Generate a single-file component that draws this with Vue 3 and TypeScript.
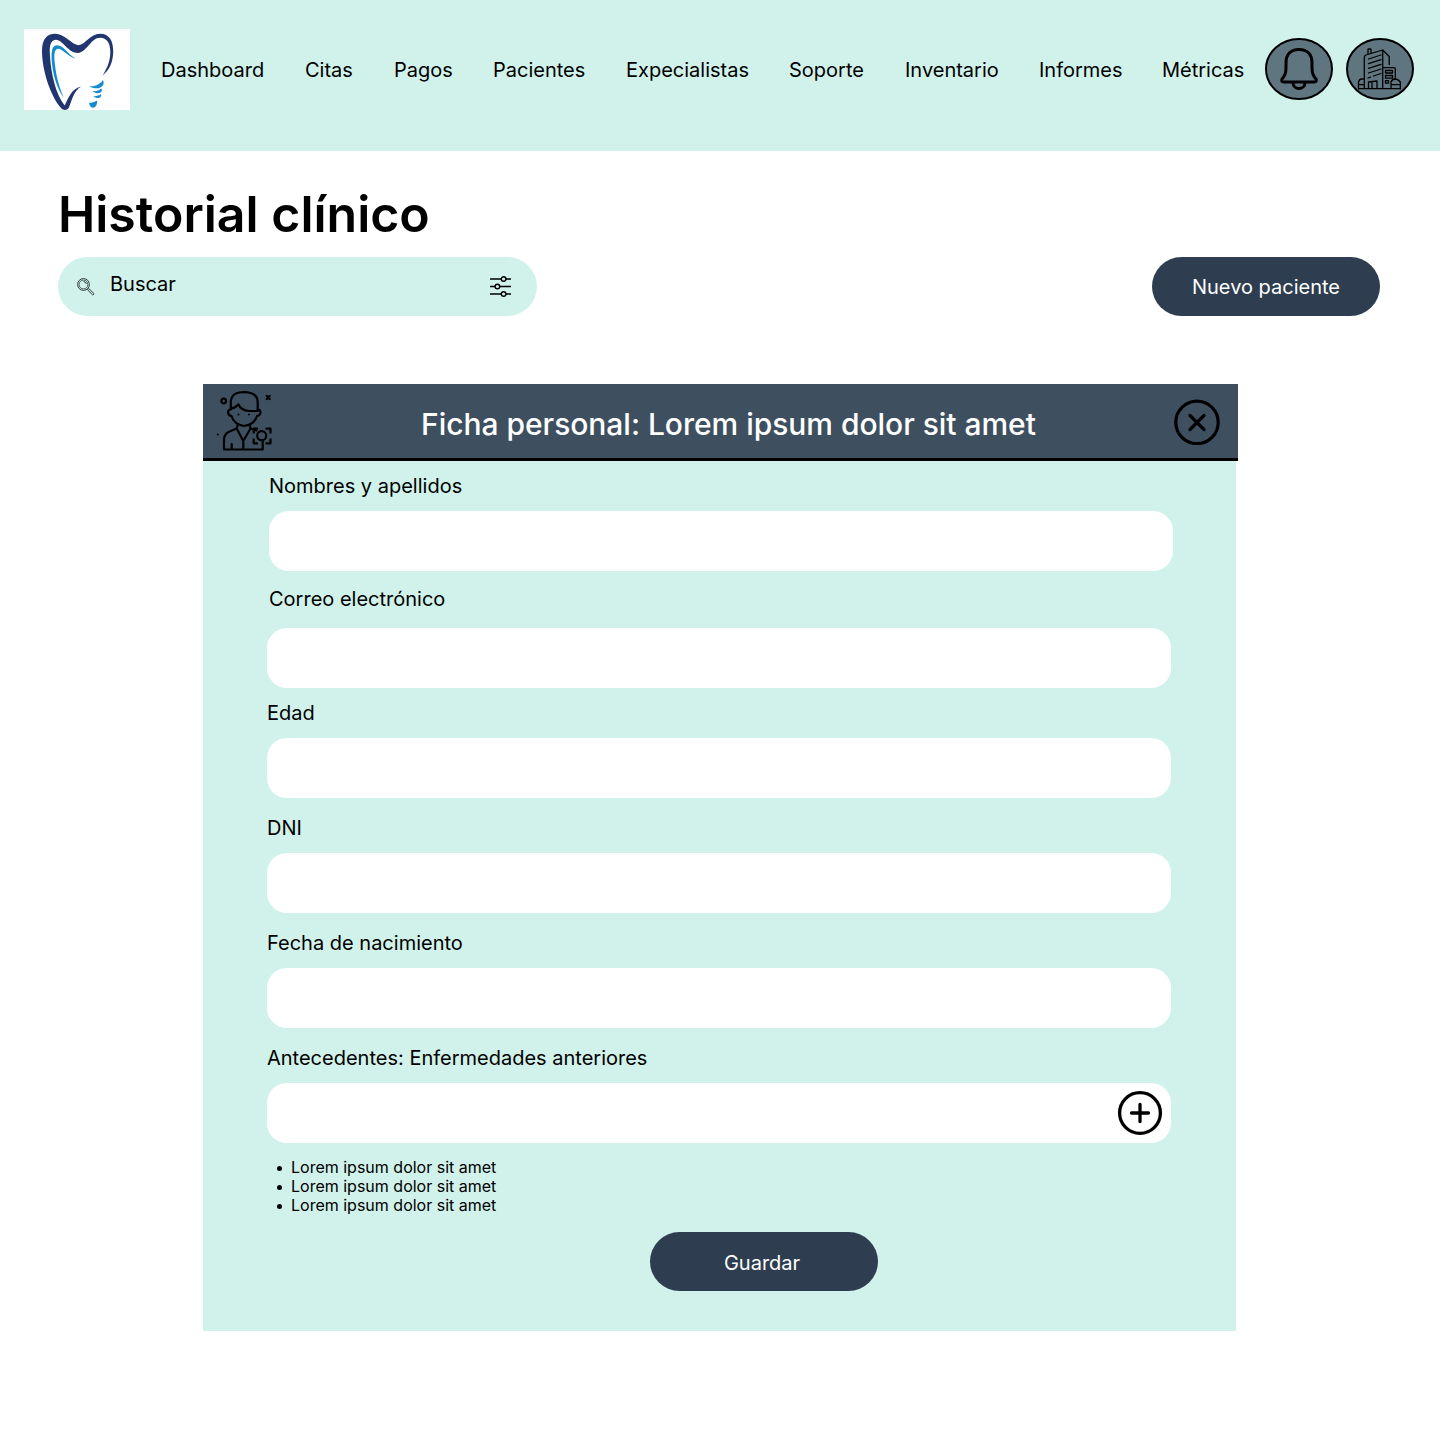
<script setup lang="ts">
interface Field {
  id: string
  label: string
  kind?: string
  addable?: boolean
}

const links: string[] = ['Dashboard', 'Citas', 'Pagos', 'Pacientes', 'Expecialistas', 'Soporte', 'Inventario', 'Informes', 'Métricas']

const fields: Field[] = [
  { id: 'nombres', label: 'Nombres y apellidos', kind: 'first' },
  { id: 'correo', label: 'Correo electrónico', kind: 'email' },
  { id: 'edad', label: 'Edad', kind: 'age' },
  { id: 'dni', label: 'DNI' },
  { id: 'nacimiento', label: 'Fecha de nacimiento' },
  { id: 'antecedentes', label: 'Antecedentes: Enfermedades anteriores', addable: true },
]

const history: string[] = ['Lorem ipsum dolor sit amet', 'Lorem ipsum dolor sit amet', 'Lorem ipsum dolor sit amet']
</script>

<template>
  <div class="page">
    <header class="topbar">
      <svg class="logo" viewBox="0 0 106 81" aria-label="Logo">
        <rect width="106" height="81" fill="#fff" />
        <path fill="#21366f" d="M18 22C18 10 23 4.700 31 4.700C41 4.700 47.500 15.500 54.500 16.300C61.500 15.500 66 4.700 76 4.700C86 4.700 89.500 13 89.200 23C88.800 34 85.500 41 78.500 46.500C84 38 86.300 31 86.300 23C86.300 14 83 8.700 76 8.700C67 8.700 63 23 54 24C44 24 39 11 32 10.800C26 11 25.300 18 26 27C27 45 32 66 40.700 76.500C45 68 47 60.500 57 57.500C49.500 62.500 48 71 45 78.300C43.500 81.500 39.500 82 37 79C26.500 67 18 41 18 22Z" />
        <path fill="#138bcd" d="M51.500 29.500C43 27 38.500 19.500 33.800 19.700C30 20 29.800 27 31 36C32.500 49 35.500 59 39.700 68.500C33 60 28.500 45 27.700 31C27.200 21 28.500 16.300 33 16.300C40 16.300 43 25 51.500 29.500Z" />
        <path fill="#138bcd" d="M65 57.300C70 58 76 55.500 79 51C80.500 54 79.500 56.500 76.500 58.500C73.500 60 69 59.500 65 57.300ZM68.500 62C72 62.500 75 61.500 77.500 59.500C78.800 62 77 64 74 64.300C71.500 64.500 70 63 68.500 62ZM69.500 67.200C72.500 67.500 75 66.500 77 65C77.500 68 76 69 74 69C72 69 70.500 68.300 69.500 67.200ZM65 73.800C68 73.800 70.500 73 73 71.500C73.500 75 72 78.700 69 78.700C66.500 78.700 65.500 76 65 73.800Z" />
      </svg>
      <nav class="nav">
        <a v-for="link in links" :key="link">{{ link }}</a>
      </nav>
      <div class="actions">
        <svg class="round" viewBox="0 0 68 62" aria-label="Notificaciones">
          <ellipse cx="34" cy="31" rx="33" ry="30" fill="#5f7681" stroke="#000" stroke-width="2" />
          <g fill="none" stroke="#000" stroke-width="3" stroke-linejoin="round">
            <path d="M21 25C21 16 26 11.500 34 11.500S47 16 47 25V30C47 36 49 39 51 41C52 43 51 44 49.500 44H18.500C17 44 16 43 17 41C19 39 21 36 21 30Z" />
            <path d="M28 44.500C28 48.500 31 50.500 34 50.500S40 48.500 40 44.500" />
          </g>
        </svg>
        <svg class="round" viewBox="0 0 68 62" aria-label="Clínica">
          <ellipse cx="34" cy="31" rx="33" ry="30" fill="#5f7681" stroke="#000" stroke-width="2" />
          <g fill="none" stroke="#000" stroke-width="1.300" stroke-linejoin="round" stroke-linecap="round">
            <path d="M18.300 50V19.500Q18.300 17.500 20 17L36.700 12V50M36.700 12L43.200 18.500V26.500M22 16V11.500Q22 11 22.500 11H24.500Q25 11 25 11.500V15.500" />
            <path d="M22.500 21L35 17M22.500 25.700L35 21.700M22.500 30.400L35 26.400M22.500 35L35 31M22 40L24.500 39.200M27.500 38L35 35.500" />
            <path d="M37 29.700H48Q49.300 29.700 49.300 31V41M39.500 32.500H46.500V35H39.500ZM39.500 37.500H46.500V40.200H39.500ZM39.500 42.700H42.500V45.200H39.500Z" />
            <path d="M12.500 51V44Q13.500 41 15.500 41H18M12.500 46.700H18M22.500 50V44L31 43V50M26 50V44M45 50V44Q46 41 49.300 41Q52 41 54.300 44V51M45 46.700H54.300M12.500 50.600H54.300" />
          </g>
        </svg>
      </div>
    </header>

    <main>
      <h1>Historial clínico</h1>
      <div class="toolbar">
        <div class="search">
          <svg class="lens" width="18" height="18" viewBox="0 0 18 18" fill="none" stroke="#2c3a37">
            <circle cx="6.500" cy="6.500" r="5.900" stroke-width="1" />
            <circle cx="6.500" cy="6.500" r="4.400" stroke-width=".8" />
            <path d="M10.500 11.800L11.800 10.500L16.700 15.400Q17.100 16.900 15.600 16.800ZM6.600 3.500Q9 3.700 9.400 6" stroke-width="1" />
          </svg>
          <span>Buscar</span>
          <svg class="filter" width="22" height="22" viewBox="0 0 22 22" fill="none" stroke="#000" stroke-width="1.400">
            <path d="M0 3H11M16 3H21M0 10.500H5M10 10.500H21M0 18H11M16 18H21" />
            <circle cx="13.600" cy="3" r="2.300" />
            <circle cx="7.400" cy="10.500" r="2.300" />
            <circle cx="13.600" cy="18" r="2.300" />
          </svg>
        </div>
        <button class="pill" type="button">Nuevo paciente</button>
      </div>

      <section class="card">
        <div class="card-head">
          <svg class="patient" width="58" height="62" viewBox="0 0 58 62" fill="none" stroke="#000" stroke-width="2.200" stroke-linejoin="round" stroke-linecap="round">
            <path d="M14.800 18V10Q15.500 3 23 1.500Q30 .5 36 2.500Q41.700 5 41.700 11V19M14.800 17.500Q19.500 17 22.300 13.300Q25 19.500 33 20H41.700" />
            <path d="M14.800 18.500Q12 18.500 12 21.500Q12.500 24.500 15.500 25Q18 33.500 28 35Q38.500 33.500 41 25Q44.300 24.500 44.500 21.500Q44.500 18.500 41.700 18.500" />
            <path d="M21.500 34.500L20.700 37.500L27.300 50L34.500 37.500L33.800 34.500M20.700 37.500L12.500 41Q8 43.500 8 49V58.500H46.700V50.500M34.500 37.500L40.500 39.500M27.300 50V58.500M15.700 53V58.500" />
            <circle cx="45.700" cy="44.700" r="4.500" />
            <path d="M37.700 42.500V37.700H42M49.500 37.700H54.500V42.500M54.500 47.500V52.300H49.500M42 52.300H37.700V47.500" stroke-linecap="butt" />
            <circle cx="7.700" cy="10" r="2.300" />
            <path d="M50.700 5L53.700 8M53.700 5L50.700 8" />
            <path d="M22.500 23.500V23.600M33 23.500V23.600M1.800 43.400V43.500" stroke-width="2" />
          </svg>
          <h2>Ficha personal: Lorem ipsum dolor sit amet</h2>
          <svg class="close" width="46" height="46" viewBox="0 0 46 46" fill="none" stroke="#000" stroke-width="3.200" stroke-linecap="round">
            <circle cx="23" cy="23.400" r="21.200" />
            <path d="M16 16.500L30 30.500M30 16.500L16 30.500" />
          </svg>
        </div>
        <form class="form" @submit.prevent>
          <div v-for="field in fields" :key="field.id" class="field" :class="field.kind">
            <label :for="field.id">{{ field.label }}</label>
            <div class="box">
              <input :id="field.id" type="text" />
              <svg v-if="field.addable" class="add" width="46" height="46" viewBox="0 0 46 46" fill="none" stroke="#000" stroke-width="3.300" stroke-linecap="round">
                <circle cx="23" cy="23" r="20.400" />
                <path d="M23 14.500V31.500M14.500 23H31.500" />
              </svg>
            </div>
          </div>
          <ul>
            <li v-for="(item, i) in history" :key="i">{{ item }}</li>
          </ul>
          <button class="pill save" type="submit">Guardar</button>
        </form>
      </section>
    </main>
  </div>
</template>

<style>
body {
  background: #fff;
}
</style>

<style scoped>
.page {
  box-sizing: border-box;
  width: 1440px;
  height: 1432px;
  overflow: hidden;
  background: #fff;
  color: #000;
  font: 400 20px/24px Inter, "Liberation Sans", sans-serif;
}
.topbar {
  box-sizing: border-box;
  display: flex;
  align-items: flex-start;
  height: 151px;
  padding: 29px 26px 0 24px;
  background: #d1f2eb;
}
.logo {
  width: 106px;
  height: 81px;
  flex: none;
}
.nav {
  display: grid;
  grid-template-columns: 144px 89px 99px 133px 163px 116px 134px 123px 103px;
  margin: 29px 0 0 31px;
  white-space: nowrap;
}
.actions {
  display: flex;
  gap: 13px;
  margin-top: 9px;
}
.round {
  width: 68px;
  height: 62px;
}
h1 {
  margin: 33px 0 0 58px;
  font-size: 50px;
  line-height: 60px;
  font-weight: 600;
}
.toolbar {
  display: flex;
  justify-content: space-between;
  margin: 13px 60px 0 58px;
}
.search {
  box-sizing: border-box;
  display: flex;
  align-items: flex-start;
  width: 479px;
  height: 59px;
  padding: 15px 25px 0 19px;
  border-radius: 30px;
  background: #d1f2eb;
}
.lens {
  margin: 6px 15px 0 0;
}
.filter {
  margin: 4px 0 0 auto;
}
.pill {
  width: 228px;
  height: 59px;
  padding: 1px 0 0;
  border: 0;
  border-radius: 30px;
  background: #2e3e50;
  color: #fff;
  font: inherit;
}
.card {
  width: 1033px;
  height: 947px;
  margin: 68px 0 0 203px;
  background: #d1f2eb;
}
.card-head {
  box-sizing: border-box;
  display: flex;
  align-items: flex-start;
  width: 1035px;
  height: 77px;
  border-bottom: 3px solid #000;
  background: #3e5060;
}
.patient {
  margin: 7px 0 0 13px;
}
h2 {
  width: 616px;
  margin: 22px 0 0 147px;
  font-size: 30px;
  line-height: 36px;
  font-weight: 500;
  letter-spacing: -0.03px;
  color: #fff;
  white-space: nowrap;
}
.close {
  margin: 15px 18px 0 auto;
}
.form {
  padding: 13px 65px 0 64px;
}
.field {
  margin-top: 18px;
}
.field.first {
  margin: 0 -2px 0 2px;
}
.field.email {
  margin-top: 16px;
}
.field.age {
  margin-top: 13px;
}
label {
  display: block;
  margin-bottom: 13px;
}
.email label {
  margin: 0 0 17px 2px;
}
.box {
  display: flex;
  align-items: center;
  height: 60px;
  border-radius: 20px;
  background: #fff;
}
input {
  flex: 1;
  min-width: 0;
  height: 60px;
  padding: 0 20px;
  border: 0;
  outline: 0;
  background: none;
  font: inherit;
}
.add {
  margin-right: 8px;
}
ul {
  margin: 15px 0 0;
  padding: 0 0 0 9px;
  font-size: 16px;
  line-height: 19px;
  list-style: none;
}
li {
  display: flex;
  align-items: center;
}
li::before {
  content: "";
  width: 5px;
  height: 5px;
  margin: 2px 9.5px 0 0.5px;
  border-radius: 50%;
  background: #000;
}
.save {
  display: block;
  margin: 17px 0 0 383px;
  padding: 2px 4px 0 0;
}
</style>
